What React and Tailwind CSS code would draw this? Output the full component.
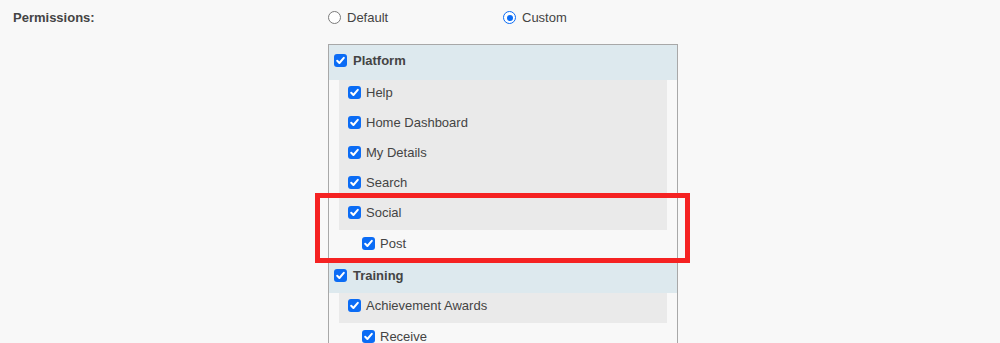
import React from "react";

function Check() {
  return (
    <span className="flex h-[13px] w-[13px] shrink-0 items-center justify-center rounded-[3px] bg-[#0b6cf5]">
      <svg width="11" height="11" viewBox="0 0 11 11">
        <path d="M2.2 5.8 L4.4 8 L8.8 2.8" fill="none" stroke="#fff" strokeWidth="2" strokeLinecap="round" strokeLinejoin="round" />
      </svg>
    </span>
  );
}

function Row({ label, bold, className = "" }) {
  return (
    <div className={`flex h-[30px] items-center gap-[5px] pb-[5px] ${className}`}>
      <Check />
      <span className={bold ? "font-bold" : ""}>{label}</span>
    </div>
  );
}

function Group({ title, first, items }) {
  return (
    <div>
      <div className={`bg-[#dde9ee] pl-[5px] ${first ? "pt-[3px] pb-[2px]" : ""}`}>
        <Row label={title} bold className="gap-[6px]" />
      </div>
      {items.map((it, i) => (
        <div key={i}>
          <div className="mx-[10px] bg-[#eaeaea] pl-[9px]">
            {it.rows.map((r) => (
              <Row key={r} label={r} />
            ))}
          </div>
          {it.sub.length > 0 && (
            <div className="pb-[2px] pl-[33px] pt-[1px]">
              {it.sub.map((s) => (
                <Row key={s} label={s} />
              ))}
            </div>
          )}
        </div>
      ))}
    </div>
  );
}

export default function App() {
  return (
    <div
      className="relative h-[343px] w-[1000px] overflow-hidden bg-[#f8f8f8] text-[13px] text-[#444]"
      style={{ fontFamily: '"Liberation Sans", Arial, sans-serif' }}
    >
      <div className="flex h-[35px] items-center">
        <div className="w-[328px] pl-[13px] font-bold">Permissions:</div>
        <div className="flex w-[175px] items-center gap-[6px]">
          <span className="h-[13px] w-[13px] rounded-full border border-[#7a7a7a] bg-white" />
          <span>Default</span>
        </div>
        <div className="flex items-center gap-[6px]">
          <span className="flex h-[13px] w-[13px] items-center justify-center rounded-full border-[1.5px] border-[#0b6cf5] bg-white">
            <span className="h-[6px] w-[6px] rounded-full bg-[#0b6cf5]" />
          </span>
          <span>Custom</span>
        </div>
      </div>
      <div className="ml-[328px] mt-[9px] w-[350px] border border-[#a8a8a8]">
        <Group
          title="Platform"
          first
          items={[
            { rows: ["Help", "Home Dashboard", "My Details", "Search", "Social"], sub: ["Post"] },
          ]}
        />
        <Group
          title="Training"
          items={[
            { rows: ["Achievement Awards"], sub: ["Receive"] },
          ]}
        />
      </div>
      <div className="absolute left-[315px] top-[193px] h-[70px] w-[375px] border-[5px] border-[#f52222]" />
    </div>
  );
}
